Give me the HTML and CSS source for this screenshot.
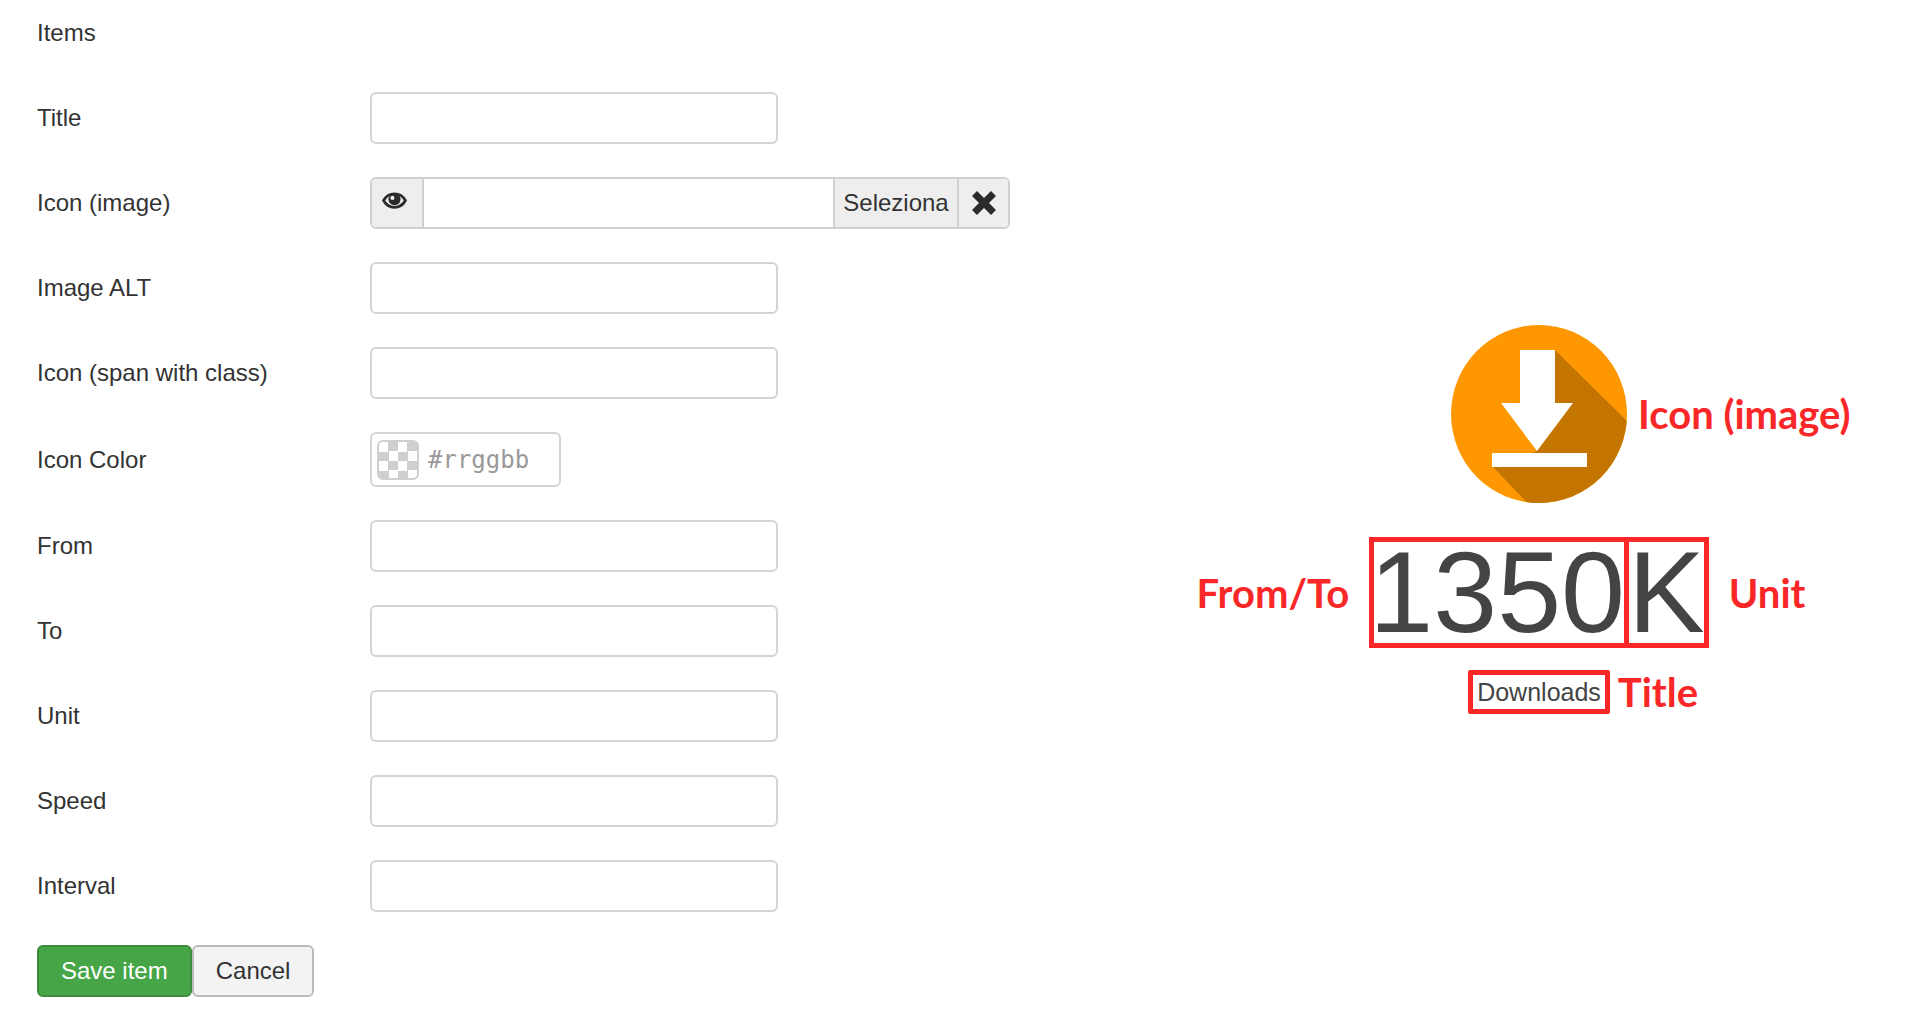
FILE: index.html
```html
<!DOCTYPE html>
<html lang="en">
<head>
    <meta charset="UTF-8">
    <meta name="viewport" content="width=device-width, initial-scale=1.0">
    <title>Items</title>
    <link rel="stylesheet" href="styles.css">
</head>
<body>
    <div class="page">
        <form class="item-form">
            <div class="form-heading">Items</div>
            <div class="control-group">
                <label for="title">Title</label>
                <input type="text" id="title">
            </div>
            <div class="control-group">
                <label for="image">Icon (image)</label>
                <div class="media-field">
                    <span class="add-on">
                        <svg class="eye" viewBox="0 0 24 16">
                            <path d="M1.500 8C4 3.500 8 1.500 12 1.500S20 3.500 22.500 8C20 12.500 16 14.500 12 14.500S4 12.500 1.500 8Z" fill="#eee" stroke="#2b2b2b" stroke-width="2.600"/>
                            <circle cx="12" cy="6.800" r="5.800" fill="#2b2b2b"/>
                            <circle cx="10" cy="5.500" r="2" fill="#eee"/>
                        </svg>
                    </span>
                    <input type="text" id="image">
                    <button type="button" class="select-btn">Seleziona</button>
                    <button type="button" class="clear-btn" aria-label="Clear">
                        <svg viewBox="0 0 26 26">
                            <path d="M3.500 3.500L22.500 22.500M22.500 3.500L3.500 22.500" stroke="#2b2b2b" stroke-width="7"/>
                        </svg>
                    </button>
                </div>
            </div>
            <div class="control-group">
                <label for="alt">Image ALT</label>
                <input type="text" id="alt">
            </div>
            <div class="control-group">
                <label for="spanIcon">Icon (span with class)</label>
                <input type="text" id="spanIcon">
            </div>
            <div class="control-group">
                <label for="color">Icon Color</label>
                <div class="color-field">
                    <span class="swatch"></span>
                    <input type="text" id="color" placeholder="#rrggbb">
                </div>
            </div>
            <div class="control-group">
                <label for="from">From</label>
                <input type="text" id="from">
            </div>
            <div class="control-group">
                <label for="to">To</label>
                <input type="text" id="to">
            </div>
            <div class="control-group">
                <label for="unit">Unit</label>
                <input type="text" id="unit">
            </div>
            <div class="control-group">
                <label for="speed">Speed</label>
                <input type="text" id="speed">
            </div>
            <div class="control-group">
                <label for="interval">Interval</label>
                <input type="text" id="interval">
            </div>
            <div class="actions">
                <button type="button" class="btn btn-save">Save item</button>
                <button type="button" class="btn">Cancel</button>
            </div>
        </form>

        <div class="preview">
            <div class="preview-row icon-row">
                <svg class="download" viewBox="0 0 176 178">
                    <defs>
                        <clipPath id="disc"><ellipse cx="88" cy="89" rx="88" ry="89"/></clipPath>
                    </defs>
                    <g clip-path="url(#disc)">
                        <rect width="176" height="178" fill="#ff9800"/>
                        <path d="M104 25L184 104V186H84L42 142L86 126Z" fill="#c47500"/>
                    </g>
                    <path d="M69 25H104V78H122L86 126L50 78H69Z" fill="#fff"/>
                    <rect x="41" y="128" width="95" height="14" fill="#fff"/>
                </svg>
                <span class="note">Icon (image)</span>
            </div>
            <div class="preview-row number-row">
                <span class="note note-left">From/To</span>
                <div class="counter">
                    <span class="number">1350</span>
                    <span class="divider"></span>
                    <span class="unit">K</span>
                </div>
                <span class="note">Unit</span>
            </div>
            <div class="preview-row title-row">
                <span class="caption">Downloads</span>
                <span class="note">Title</span>
            </div>
        </div>
    </div>
</body>
</html>
```
FILE: styles.css
```css
* {
    box-sizing: border-box;
}
body {
    margin: 0;
    background-color: #ffffff;
    color: #333;
    font-family: "Liberation Sans", Arial, sans-serif;
    font-size: 24px;
    line-height: 32px;
}
input, button {
    font: inherit;
    color: inherit;
    margin: 0;
}
.page {
    display: flex;
    align-items: center;
    justify-content: space-between;
    padding-left: 37px;
}
.item-form {
    display: flex;
    flex-direction: column;
    gap: 33px;
    padding: 17px 0 22px;
}
.form-heading {
    height: 42px;
}
.control-group {
    display: grid;
    grid-template-columns: 333px auto;
    align-items: center;
    justify-content: start;
}
.control-group > input {
    width: 408px;
}
input {
    height: 52px;
    padding: 8px 12px;
    background-color: #ffffff;
    border: 2px solid #d4d4d4;
    border-radius: 6px;
    outline: none;
}

/* image picker */
.media-field {
    display: flex;
    width: 640px;
    height: 52px;
    border: 2px solid #d0d0d0;
    border-radius: 6px;
    overflow: hidden;
}
.media-field input {
    flex: 1;
    min-width: 0;
    height: auto;
    border: none;
    border-radius: 0;
}
.add-on {
    display: flex;
    justify-content: center;
    width: 52px;
    padding: 13px 6px 0 0;
    background-color: #eee;
    border-right: 2px solid #d0d0d0;
}
.eye {
    width: 25px;
    height: 17px;
}
.select-btn, .clear-btn {
    padding: 0;
    background-color: #eee;
    border: none;
    border-left: 2px solid #d0d0d0;
    cursor: pointer;
}
.select-btn {
    width: 124px;
}
.clear-btn {
    display: flex;
    align-items: center;
    justify-content: center;
    width: 51px;
}
.clear-btn svg {
    width: 26px;
    height: 26px;
}

/* color picker */
.color-field {
    display: flex;
    align-items: center;
    gap: 9px;
    width: 191px;
    height: 55px;
    padding: 0 6px 0 5px;
    border: 2px solid #d4d4d4;
    border-radius: 6px;
}
.color-field input {
    flex: 1;
    min-width: 0;
    height: 40px;
    padding: 0;
    border: none;
    font-family: "DejaVu Sans Mono", monospace;
}
.color-field input::placeholder {
    color: #999;
    opacity: 1;
}
.swatch {
    width: 42px;
    height: 40px;
    border: 2px solid #cfcfcf;
    border-radius: 6px;
    background: repeating-conic-gradient(#cfcfcf 0 25%, #ffffff 0 50%) 0 0 / 19px 19px;
}

.actions {
    display: flex;
}
.btn {
    height: 52px;
    padding: 0 22px;
    background-color: #f3f3f3;
    border: 2px solid #bbb;
    border-radius: 6px;
    cursor: pointer;
}
.btn-save {
    background-color: #46a546;
    border-color: #3b8d3b;
    color: #ffffff;
}

/* annotated preview */
.preview {
    flex: 0 1 762px;
    display: flex;
    flex-direction: column;
    padding-top: 20px;
}
.preview-row {
    display: grid;
    grid-template-columns: 1fr auto 1fr;
    align-items: center;
}
.preview-row > :first-child:not(.note) {
    grid-column: 2;
}
.note {
    color: #f92727;
    font-family: Lato, sans-serif;
    font-size: 40px;
    font-weight: bold;
    line-height: 40px;
    white-space: nowrap;
}
.note-left {
    text-align: right;
}
.icon-row {
    column-gap: 11px;
    margin-bottom: 34px;
}
.number-row {
    column-gap: 20px;
    margin-bottom: 22px;
}
.title-row {
    column-gap: 8px;
}
.download {
    width: 176px;
    height: 178px;
}
.counter {
    display: flex;
    border: 5px solid #f92727;
    color: #444;
    font-size: 115px;
    line-height: 101px;
}
.number {
    margin: 0 -1px 0 -5px;
}
.divider {
    width: 5px;
    background-color: #f92727;
}
.unit {
    margin: 0 -1px;
}
.caption {
    padding: 1px 4px;
    border: 5px solid #f92727;
    border-radius: 2px;
    color: #444;
    font-size: 25px;
}
```
